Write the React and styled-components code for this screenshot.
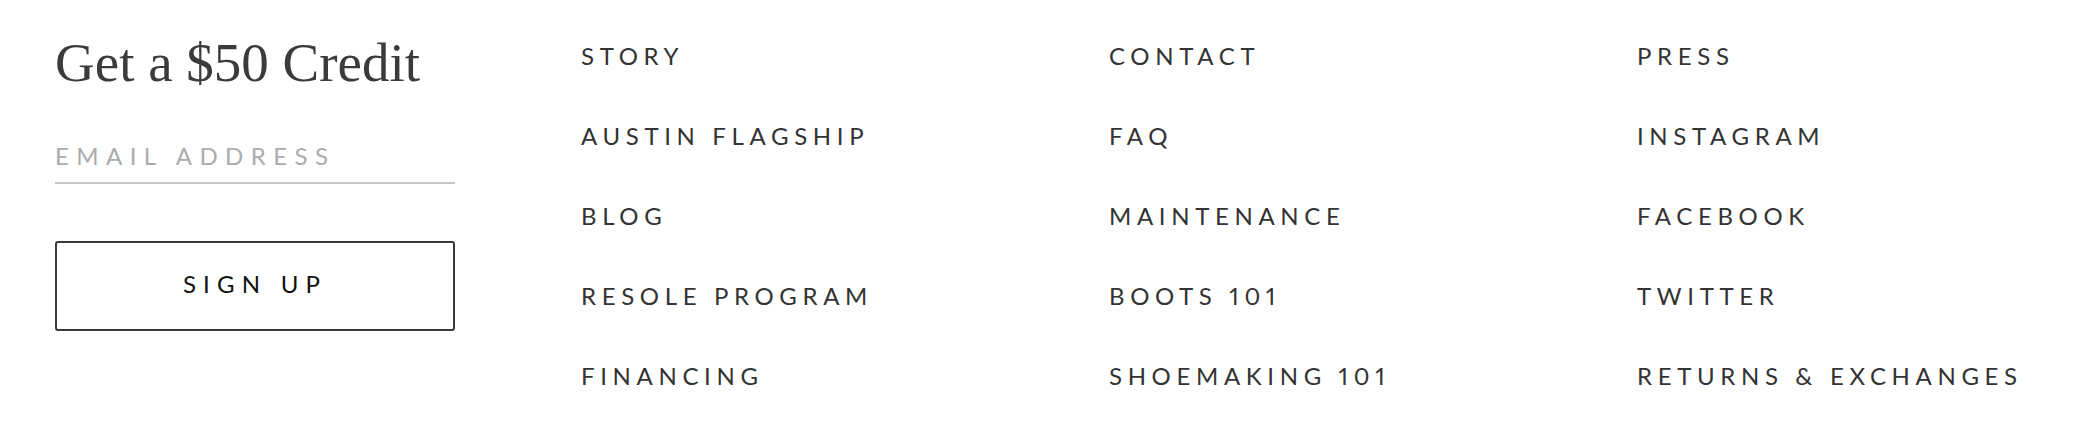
import React from 'react'
import styled, { createGlobalStyle } from 'styled-components'

const GlobalStyle = createGlobalStyle`
  body {
    margin: 0;
    background: #fff;
  }
`

const columns = [
  ['STORY', 'AUSTIN FLAGSHIP', 'BLOG', 'RESOLE PROGRAM', 'FINANCING'],
  ['CONTACT', 'FAQ', 'MAINTENANCE', 'BOOTS 101', 'SHOEMAKING 101'],
  ['PRESS', 'INSTAGRAM', 'FACEBOOK', 'TWITTER', 'RETURNS & EXCHANGES'],
]

function App() {
  return (
    <>
      <GlobalStyle />
      <FooterContainer>
        <Signup>
          <Heading>Get a $50 Credit</Heading>
          <EmailInput type="email" placeholder="EMAIL ADDRESS" />
          <SignupButton>SIGN UP</SignupButton>
        </Signup>
        {columns.map((links, i) => (
          <LinkList key={i}>
            {links.map((link) => (
              <li key={link}>
                <FooterLink href="#">{link}</FooterLink>
              </li>
            ))}
          </LinkList>
        ))}
      </FooterContainer>
    </>
  )
}

export default App

const FooterContainer = styled.footer`
  display: grid;
  grid-template-columns: 526px 528px 528px 1fr;
  align-items: start;
  padding: 35px 0 0 55px;
  height: 446px;
  box-sizing: border-box;
  font-family: Lato, 'Liberation Sans', sans-serif;
  font-variant-numeric: proportional-nums;
`

const Signup = styled.div`
  display: flex;
  flex-direction: column;
  width: 400px;
`

const Heading = styled.h2`
  margin: 0;
  font-family: 'Liberation Serif', serif;
  font-weight: 400;
  font-size: 55px;
  line-height: 55px;
  color: #3b3b3b;
`

const EmailInput = styled.input`
  margin-top: 48px;
  height: 46px;
  box-sizing: border-box;
  padding: 0 0 10px 0;
  border: none;
  border-bottom: 2px solid #c6c6c6;
  outline: none;
  font-family: inherit;
  font-size: 24px;
  letter-spacing: 0.31em;
  color: #333;
  background: transparent;

  &::placeholder {
    color: #acacac;
  }
`

const SignupButton = styled.button`
  margin-top: 57px;
  height: 90px;
  width: 400px;
  box-sizing: border-box;
  border: 2px solid #3a3a3a;
  border-radius: 3px;
  padding: 0 0 5px 0;
  background: #fff;
  font-family: inherit;
  font-size: 24px;
  letter-spacing: 0.3em;
  color: #111;
  cursor: pointer;
`

const LinkList = styled.ul`
  list-style: none;
  margin: 0;
  padding: 9px 0 0 0;
  display: flex;
  flex-direction: column;
  gap: 56px;
  font-size: 24px;

  li {
    line-height: 24px;
  }
`

const FooterLink = styled.a`
  letter-spacing: 0.235em;
  color: #333;
  text-decoration: none;
  white-space: nowrap;
`
